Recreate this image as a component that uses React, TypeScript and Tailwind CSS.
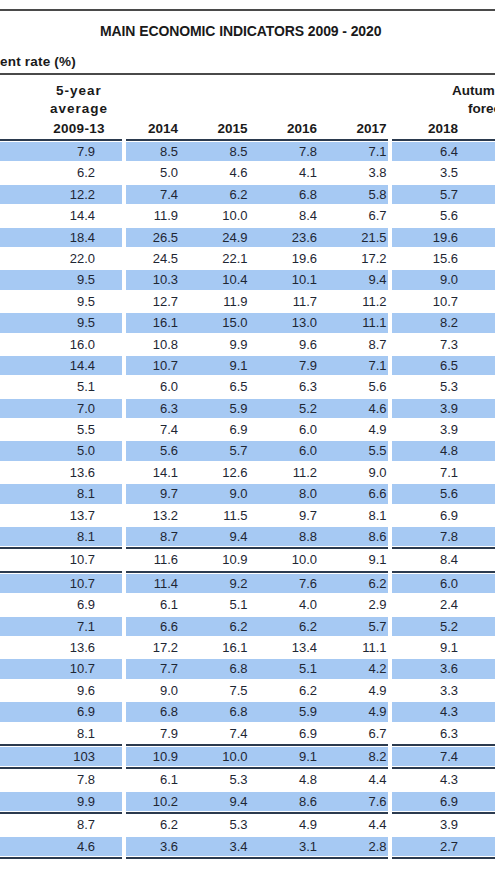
import clsx from "clsx";

type Row = {
  avg: string;
  years: [string, string, string, string];
  y2018: string;
  lineAfter?: boolean;
};

const rows: Row[] = [
  { avg: "7.9", years: ["8.5", "8.5", "7.8", "7.1"], y2018: "6.4" },
  { avg: "6.2", years: ["5.0", "4.6", "4.1", "3.8"], y2018: "3.5" },
  { avg: "12.2", years: ["7.4", "6.2", "6.8", "5.8"], y2018: "5.7" },
  { avg: "14.4", years: ["11.9", "10.0", "8.4", "6.7"], y2018: "5.6" },
  { avg: "18.4", years: ["26.5", "24.9", "23.6", "21.5"], y2018: "19.6" },
  { avg: "22.0", years: ["24.5", "22.1", "19.6", "17.2"], y2018: "15.6" },
  { avg: "9.5", years: ["10.3", "10.4", "10.1", "9.4"], y2018: "9.0" },
  { avg: "9.5", years: ["12.7", "11.9", "11.7", "11.2"], y2018: "10.7" },
  { avg: "9.5", years: ["16.1", "15.0", "13.0", "11.1"], y2018: "8.2" },
  { avg: "16.0", years: ["10.8", "9.9", "9.6", "8.7"], y2018: "7.3" },
  { avg: "14.4", years: ["10.7", "9.1", "7.9", "7.1"], y2018: "6.5" },
  { avg: "5.1", years: ["6.0", "6.5", "6.3", "5.6"], y2018: "5.3" },
  { avg: "7.0", years: ["6.3", "5.9", "5.2", "4.6"], y2018: "3.9" },
  { avg: "5.5", years: ["7.4", "6.9", "6.0", "4.9"], y2018: "3.9" },
  { avg: "5.0", years: ["5.6", "5.7", "6.0", "5.5"], y2018: "4.8" },
  { avg: "13.6", years: ["14.1", "12.6", "11.2", "9.0"], y2018: "7.1" },
  { avg: "8.1", years: ["9.7", "9.0", "8.0", "6.6"], y2018: "5.6" },
  { avg: "13.7", years: ["13.2", "11.5", "9.7", "8.1"], y2018: "6.9" },
  { avg: "8.1", years: ["8.7", "9.4", "8.8", "8.6"], y2018: "7.8", lineAfter: true },
  { avg: "10.7", years: ["11.6", "10.9", "10.0", "9.1"], y2018: "8.4", lineAfter: true },
  { avg: "10.7", years: ["11.4", "9.2", "7.6", "6.2"], y2018: "6.0" },
  { avg: "6.9", years: ["6.1", "5.1", "4.0", "2.9"], y2018: "2.4" },
  { avg: "7.1", years: ["6.6", "6.2", "6.2", "5.7"], y2018: "5.2" },
  { avg: "13.6", years: ["17.2", "16.1", "13.4", "11.1"], y2018: "9.1" },
  { avg: "10.7", years: ["7.7", "6.8", "5.1", "4.2"], y2018: "3.6" },
  { avg: "9.6", years: ["9.0", "7.5", "6.2", "4.9"], y2018: "3.3" },
  { avg: "6.9", years: ["6.8", "6.8", "5.9", "4.9"], y2018: "4.3" },
  { avg: "8.1", years: ["7.9", "7.4", "6.9", "6.7"], y2018: "6.3", lineAfter: true },
  { avg: "103", years: ["10.9", "10.0", "9.1", "8.2"], y2018: "7.4", lineAfter: true },
  { avg: "7.8", years: ["6.1", "5.3", "4.8", "4.4"], y2018: "4.3" },
  { avg: "9.9", years: ["10.2", "9.4", "8.6", "7.6"], y2018: "6.9", lineAfter: true },
  { avg: "8.7", years: ["6.2", "5.3", "4.9", "4.4"], y2018: "3.9" },
  { avg: "4.6", years: ["3.6", "3.4", "3.1", "2.8"], y2018: "2.7", lineAfter: true },
];

const yearCols = "grid grid-cols-[52px_69.5px_69.5px_69.5px] pr-[1px] text-right";

function RuleLine() {
  return (
    <div className="flex h-[2px] gap-[4px]">
      <div className="w-[122px] shrink-0 bg-[#2b3a4e]" />
      <div className="w-[262px] shrink-0 bg-[#2b3a4e]" />
      <div className="min-w-0 flex-1 bg-[#2b3a4e]" />
    </div>
  );
}

function DataRow({ row, shaded }: { row: Row; shaded: boolean }) {
  const band = shaded ? "bg-[#a6c9f3]" : "bg-white";
  return (
    <>
      <div className="flex h-[21.4px] gap-[4px] py-[1px] text-[13px] leading-[19.4px] text-[#1e2633]">
        <div className={clsx("w-[122px] shrink-0 pr-[27px] text-right", band)}>{row.avg}</div>
        <div className={clsx("w-[262px] shrink-0", yearCols, band)}>
          {row.years.map((v, i) => (
            <div key={i}>{v}</div>
          ))}
        </div>
        <div className={clsx("min-w-0 flex-1", band)}>
          <div className="w-[66px] text-right">{row.y2018}</div>
        </div>
      </div>
      {row.lineAfter && <RuleLine />}
    </>
  );
}

export default function App() {
  return (
    <div className="h-[880px] w-[495px] overflow-hidden bg-white pt-[9px] font-['Liberation_Sans',Arial,sans-serif] text-[#1a1a1a]">
      <div className="h-[2px] bg-[#4a4a4a]" />
      <div className="mt-[12px] h-[16px] whitespace-nowrap pl-[100px] text-[14px] font-bold leading-[16px] tracking-[-0.1px]">
        MAIN ECONOMIC INDICATORS 2009 - 2020
      </div>
      <div className="mt-[15px] h-[16px] whitespace-nowrap text-[13.5px] font-bold leading-[16px] tracking-[0.2px]">
        ent rate (%)
      </div>
      <div className="mt-[3px] h-[2px] bg-[#4a4a4a]" />

      <div className="flex gap-[4px] pt-[7px] text-[13.5px] font-bold">
        <div className="w-[122px] shrink-0 pl-[36px] text-center">
          <div className="h-[18px] leading-[18px] tracking-[1px]">5-year</div>
          <div className="h-[18px] leading-[18px] tracking-[1px]">average</div>
          <div className="h-[21px] leading-[21px] tracking-[0.3px]">2009-13</div>
        </div>
        <div className="w-[262px] shrink-0">
          <div className="h-[36px]" />
          <div className={clsx("h-[21px] leading-[21px]", yearCols)}>
            <div>2014</div>
            <div>2015</div>
            <div>2016</div>
            <div>2017</div>
          </div>
        </div>
        <div className="min-w-0 flex-1 overflow-hidden whitespace-nowrap">
          <div className="h-[18px] pl-[60px] leading-[18px]">Autumn</div>
          <div className="h-[18px] pl-[76px] leading-[18px]">forecast</div>
          <div className="h-[21px] w-[66px] text-right leading-[21px]">2018</div>
        </div>
      </div>
      <RuleLine />

      {rows.map((row, i) => (
        <DataRow key={i} row={row} shaded={i % 2 === 0} />
      ))}
    </div>
  );
}
